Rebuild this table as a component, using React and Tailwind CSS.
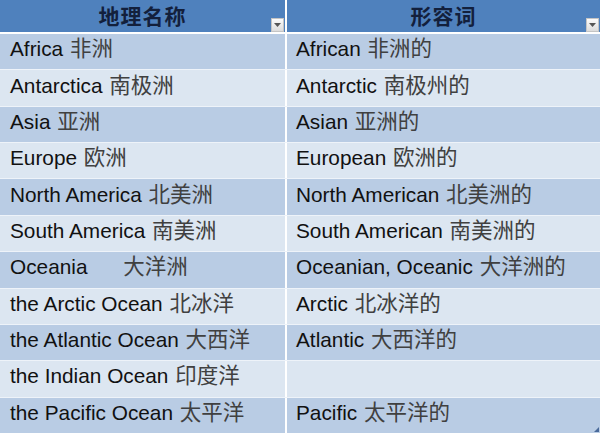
import React from "react";

const rows = [
  ["Africa", "非洲", "African", "非洲的"],
  ["Antarctica", "南极洲", "Antarctic", "南极州的"],
  ["Asia", "亚洲", "Asian", "亚洲的"],
  ["Europe", "欧洲", "European", "欧洲的"],
  ["North America", "北美洲", "North American", "北美洲的"],
  ["South America", "南美洲", "South American", "南美洲的"],
  ["Oceania\u00a0\u00a0\u00a0\u00a0\u00a0", "大洋洲", "Oceanian, Oceanic", "大洋洲的"],
  ["the Arctic Ocean", "北冰洋", "Arctic", "北冰洋的"],
  ["the Atlantic Ocean", "大西洋", "Atlantic", "大西洋的"],
  ["the Indian Ocean", "印度洋", "", ""],
  ["the Pacific Ocean", "太平洋", "Pacific", "太平洋的"],
];

function Filter() {
  return (
    <div className="absolute right-[1px] bottom-0 w-[13px] h-[14px] bg-gradient-to-b from-[#fbfbfb] to-[#dcdcdc] border border-[#c4c4c4] flex items-center justify-center">
      <svg width="7" height="4" viewBox="0 0 7 4">
        <polygon points="0,0 7,0 3.5,4" fill="#555" />
      </svg>
    </div>
  );
}

function Cell({ en, zh, left }) {
  return (
    <div
      className={
        "flex items-center pb-[5px] text-[20.8px] leading-[24px] text-[#111] whitespace-pre " +
        (left ? "w-[287px] pl-[10px] border-r-2 border-white" : "flex-1 pl-[9px]")
      }
    >
      {en ? (
        <>
          <span className="leading-[24px]">{en} </span>
          <span className="text-[#404040] text-[21.5px] leading-[24px] ml-[1px]">{zh}</span>
        </>
      ) : null}
    </div>
  );
}

export default function App() {
  return (
    <div
      className="w-[600px] h-[433px] overflow-hidden flex flex-col bg-white relative"
      style={{ fontFamily: '"Liberation Sans", Arial, "Noto Sans CJK SC", sans-serif' }}
    >
      <div className="flex h-[34px] bg-[#4f81bd] border-b-2 border-white shrink-0">
        <div className="relative w-[287px] border-r-2 border-white flex justify-center pt-[1px]">
          <span
            className="text-[21px] font-bold text-[#13203c] leading-[28px] tracking-[1px]"
            style={{ fontFamily: '"Noto Sans CJK SC", sans-serif' }}
          >
            地理名称
          </span>
          <Filter />
        </div>
        <div className="relative flex-1 flex justify-center pt-[1px]">
          <span
            className="text-[21px] font-bold text-[#13203c] leading-[28px] tracking-[1px]"
            style={{ fontFamily: '"Noto Sans CJK SC", sans-serif' }}
          >
            形容词
          </span>
          <Filter />
        </div>
      </div>
      <div className="flex-1 min-h-0 flex flex-col">
        {rows.map((r, i) => (
          <div
            key={i}
            className={
              "flex flex-1 basis-0 min-h-0 " +
              (i > 0 ? "border-t border-[#eef3f9] " : "") +
              (i % 2 === 0 ? "bg-[#b9cce4]" : "bg-[#dce6f1]")
            }
          >
            <Cell en={r[0]} zh={r[1]} left />
            <Cell en={r[2]} zh={r[3]} />
          </div>
        ))}
      </div>
      <svg className="absolute right-[1px] bottom-[1px]" width="5" height="5" viewBox="0 0 5 5">
        <polygon points="5,0 5,5 0,5" fill="#4a6a9a" />
      </svg>
    </div>
  );
}
